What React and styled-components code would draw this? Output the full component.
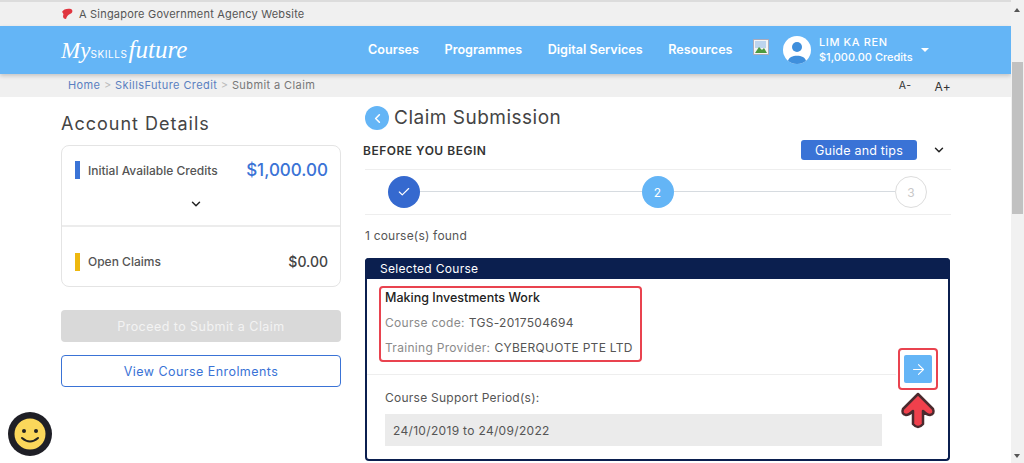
import styled, { createGlobalStyle } from 'styled-components';
import { ChevronDown, ChevronLeft, Check, ArrowRight } from 'lucide-react';

const GlobalStyle = createGlobalStyle`
    html, body {
        margin: 0;
        height: 463px;
        overflow: hidden;
        background: #fff;
        font-family: "Inter", "Open Sans", sans-serif;
        color: #4a4a4a;
    }
    * { box-sizing: border-box; }
`;

const Shell = styled.div`
    display: flex;
    width: 1024px;
    height: 463px;
    overflow: hidden;
    position: relative;
`;

const Page = styled.div`
    width: 1011px;
    flex: none;
    border-top: 2px solid #dcdcdc;
`;

const GovBar = styled.div`
    height: 24px;
    background: #f0f0f0;
    display: flex;
    align-items: center;
    gap: 6px;
    padding-left: 61px;
    font-size: 11px;
    letter-spacing: 0.2px;
    color: #555;
`;

const NavBar = styled.header`
    height: 48px;
    background: #64b5f6;
    display: flex;
    align-items: center;
    padding: 0 0 0 61px;
    box-shadow: 0 2px 4px rgba(0, 0, 0, 0.18);
    position: relative;
    color: #fff;
`;

const Logo = styled.div`
    width: 307px;
    display: flex;
    align-items: baseline;
    color: #fff;
    margin-top: -2px;
`;

const LogoScript = styled.span`
    font-family: "Liberation Serif", serif;
    font-style: italic;
    font-size: ${({ $big }) => ($big ? '25px' : '23px')};
    line-height: 1;
`;

const LogoSmall = styled.span`
    font-size: 10px;
    letter-spacing: 0.6px;
    margin: 0 1px 0 0;
`;

const NavLinks = styled.nav`
    display: flex;
    gap: 25.6px;
    font-size: 12.6px;
    font-weight: 600;
    width: 385px;
    margin-top: -2px;
`;

const BrokenImage = styled.svg`
    width: 16px;
    height: 16px;
    margin: -6px 14px 0 0;
`;

const Avatar = styled.div`
    width: 28px;
    height: 28px;
    border-radius: 50%;
    background: #fff;
    overflow: hidden;
    margin-right: 8px;
`;

const UserInfo = styled.div`
    width: 102px;
    font-size: 11px;
    line-height: 15px;
    font-weight: 500;
    letter-spacing: 0;
`;

const UserName = styled.div`
    letter-spacing: 0.6px;
`;

const Caret = styled.div`
    width: 0;
    height: 0;
    border-left: 4px solid transparent;
    border-right: 4px solid transparent;
    border-top: 4px solid #fff;
`;

const Crumbs = styled.div`
    height: 23px;
    background: #f0f0f0;
    display: flex;
    align-items: center;
    padding: 0 60px 2px 68px;
    font-size: 11px;
    letter-spacing: 0.4px;
    color: #777;
`;

const Crumb = styled.span`
    color: ${({ $link }) => ($link ? '#5a7fc0' : '#777')};
`;

const CrumbSep = styled.span`
    color: #bbb;
    margin: 0 3.5px;
`;

const FontSizes = styled.div`
    margin-left: auto;
    display: flex;
    gap: 23px;
    padding-top: 3px;
    color: #333;
`;

const FontSize = styled.span`
    font-size: ${({ $big }) => ($big ? '12px' : '10.5px')};
`;

const Main = styled.main`
    display: grid;
    grid-template-columns: 280px 586px;
    column-gap: 24px;
    padding-left: 61px;
`;

const Side = styled.aside`
    display: flex;
    flex-direction: column;
`;

const SideTitle = styled.h2`
    margin: 16px 0 10px;
    height: 22px;
    line-height: 22px;
    font-size: 18px;
    font-weight: 400;
    letter-spacing: 1px;
    color: #444;
`;

const CreditCard = styled.section`
    height: 142px;
    border: 1px solid #e4e4e4;
    border-radius: 8px;
    display: flex;
    flex-direction: column;
`;

const CreditTop = styled.div`
    height: 81px;
    border-bottom: 2px solid #ececec;
    padding: 14px 12px 0 13px;
`;

const CreditBottom = styled.div`
    flex: 1;
    padding: 10px 12px 0 13px;
    display: flex;
    align-items: center;
`;

const CreditRow = styled.div`
    display: flex;
    align-items: center;
    width: 100%;
`;

const Marker = styled.span`
    width: 5px;
    height: 18px;
    background: ${({ $color }) => $color};
    margin-right: 8px;
`;

const CreditLabel = styled.span`
    font-size: 12px;
    font-weight: 500;
    color: #555;
`;

const CreditValue = styled.span`
    margin-left: auto;
    font-size: ${({ $big }) => ($big ? '17px' : '14px')};
    font-weight: 500;
    color: ${({ $big }) => ($big ? '#3a73d6' : '#444')};
`;

const CardChevron = styled.div`
    display: flex;
    justify-content: center;
    margin: 17px 12px 0 0;
    color: #222;
`;

const SideButton = styled.button`
    height: 32px;
    border-radius: 4px;
    font-family: inherit;
    font-size: 12.5px;
    letter-spacing: 0.45px;
    margin-top: ${({ $gap }) => $gap}px;
    background: ${({ $outline }) => ($outline ? '#fff' : '#d9d9d9')};
    color: ${({ $outline }) => ($outline ? '#3a73d6' : '#f3f3f3')};
    border: ${({ $outline }) => ($outline ? '1px solid #3a73d6' : 'none')};
`;

const Content = styled.section`
    display: flex;
    flex-direction: column;
`;

const TitleRow = styled.div`
    display: flex;
    align-items: center;
    gap: 5px;
    height: 24px;
    margin-top: 9px;
`;

const BackButton = styled.div`
    width: 24px;
    height: 24px;
    border-radius: 50%;
    background: #64b5f6;
    color: #fff;
    display: flex;
    align-items: center;
    justify-content: center;
`;

const Title = styled.h1`
    margin: -2px 0 0;
    font-size: 19px;
    font-weight: 400;
    letter-spacing: 0.5px;
    color: #444;
`;

const BeginRow = styled.div`
    height: 37px;
    margin-top: 3px;
    border-bottom: 1px solid #eee;
    display: flex;
    align-items: center;
    font-size: 12px;
    font-weight: 600;
    letter-spacing: 0.5px;
    color: #333;
    padding: 0 5px 2px 0;
    width: 586px;
    text-indent: -2px;
`;

const GuideButton = styled.span`
    margin: 0 15px 0 auto;
    width: 116px;
    height: 20px;
    border-radius: 3px;
    background: #3a73d6;
    color: #fff;
    font-weight: 400;
    font-size: 12.5px;
    letter-spacing: 0.2px;
    display: flex;
    align-items: center;
    justify-content: center;
    text-indent: 0;
`;

const Stepper = styled.div`
    height: 45px;
    border-bottom: 1px solid #eee;
    padding: 6px 24px 0 23px;
    display: flex;
    align-items: flex-start;
`;

const StepDot = styled.div`
    width: 32px;
    height: 32px;
    flex: none;
    border-radius: 50%;
    display: flex;
    align-items: center;
    justify-content: center;
    font-size: 12px;
    background: ${({ $state }) => ({ done: '#3569cf', active: '#64b5f6', todo: '#fff' }[$state])};
    color: ${({ $state }) => ($state === 'todo' ? '#c8c8c8' : '#fff')};
    border: ${({ $state }) => ($state === 'todo' ? '1px solid #ddd' : 'none')};
`;

const StepLine = styled.div`
    flex: 1;
    height: 1px;
    background: #d6dbe0;
    margin-top: 15px;
`;

const FoundText = styled.div`
    margin-top: 13px;
    height: 15px;
    line-height: 15px;
    font-size: 12px;
    letter-spacing: 0.2px;
    color: #555;
`;

const CourseCard = styled.article`
    margin-top: 15px;
    width: 585px;
    height: 203px;
    border: 2px solid #0b1f4f;
    border-top: none;
    border-radius: 4px;
    position: relative;
`;

const CourseHeader = styled.div`
    height: 21px;
    margin: 0 -2px;
    background: #0b1f4f;
    border-radius: 4px 4px 0 0;
    color: #fff;
    font-size: 12px;
    letter-spacing: 0.3px;
    padding-left: 15px;
    line-height: 22px;
`;

const CourseInfo = styled.div`
    padding: 11px 0 0 18px;
    height: 96px;
    margin-right: 52px;
    border-bottom: 1px solid #eee;
`;

const CourseName = styled.div`
    font-size: 12.5px;
    font-weight: 500;
    color: #222;
    line-height: 16px;
`;

const InfoRow = styled.div`
    display: flex;
    gap: 4px;
    font-size: 12px;
    letter-spacing: 0.3px;
    line-height: 16px;
    margin-top: 9px;
    color: #555;
`;

const InfoLabel = styled.span`
    color: #8a8a8a;
`;

const Period = styled.div`
    padding: 15px 0 0 18px;
`;

const PeriodLabel = styled.div`
    font-size: 12px;
    letter-spacing: 0.25px;
    line-height: 16px;
    color: #555;
`;

const PeriodBox = styled.div`
    margin-top: 8px;
    width: 497px;
    height: 32px;
    background: #ebebeb;
    display: flex;
    align-items: center;
    padding-left: 8px;
    font-size: 12px;
    letter-spacing: 0.32px;
    color: #555;
`;

const NextButton = styled.div`
    position: absolute;
    left: 537px;
    top: 97px;
    width: 28px;
    height: 28px;
    border-radius: 2px;
    background: #64b5f6;
    color: #fff;
    display: flex;
    align-items: center;
    justify-content: center;
`;

const Highlight = styled.div`
    position: absolute;
    left: ${({ $x }) => $x}px;
    top: ${({ $y }) => $y}px;
    width: ${({ $w }) => $w}px;
    height: ${({ $h }) => $h}px;
    border: 2px solid #e9434f;
    border-radius: 4px;
`;

const RedArrow = styled.svg`
    position: absolute;
    left: 531px;
    top: 134px;
    width: 40px;
    height: 38px;
`;

const Scrollbar = styled.div`
    flex: 1;
    background: #f1f1f1;
    display: flex;
    flex-direction: column;
    align-items: center;
    padding-top: 62px;
    position: relative;
`;

const ScrollThumb = styled.div`
    width: 11px;
    height: 152px;
    background: #c1c1c1;
`;

const ScrollTri = styled.div`
    position: absolute;
    left: 3px;
    ${({ $down }) => ($down ? 'bottom: 5px;' : 'top: 8px;')}
    width: 0;
    height: 0;
    border-left: 3.5px solid transparent;
    border-right: 3.5px solid transparent;
    ${({ $down }) => ($down ? 'border-top: 4px solid #555;' : 'border-bottom: 4px solid #555;')}
`;

const Chat = styled.svg`
    position: absolute;
    left: 8px;
    top: 412px;
    width: 44px;
    height: 44px;
`;

export default function App() {
    return (
        <Shell>
            <GlobalStyle />
            <Page>
                <GovBar>
                    <svg width="12" height="12" viewBox="0 0 12 12">
                        <path d="M1 4 C2 1 7 0 10 1 C12 2 12 5 9 6 C7 7 6 8 5 11 C3 11 2 10 2 8 C3 6 2 5 1 4Z" fill="#e0353f" />
                    </svg>
                    A Singapore Government Agency Website
                </GovBar>
                <NavBar>
                    <Logo>
                        <LogoScript>My</LogoScript>
                        <LogoSmall>SKILLS</LogoSmall>
                        <LogoScript $big>future</LogoScript>
                    </Logo>
                    <NavLinks>
                        <span>Courses</span>
                        <span>Programmes</span>
                        <span>Digital Services</span>
                        <span>Resources</span>
                    </NavLinks>
                    <BrokenImage viewBox="0 0 16 16">
                        <rect x="0.5" y="0.5" width="15" height="15" fill="#f4f4f4" stroke="#aab" />
                        <rect x="2" y="2" width="11" height="7" fill="#bcd4ee" />
                        <path d="M2 14 L6 8 L9 11 L11 9 L14 14Z" fill="#4c9a3f" />
                    </BrokenImage>
                    <Avatar>
                        <svg width="28" height="28" viewBox="0 0 28 28">
                            <circle cx="14" cy="11" r="5" fill="#3f8fdc" />
                            <path d="M5 25 C6 18 22 18 23 25 L23 28 L5 28Z" fill="#3f8fdc" />
                        </svg>
                    </Avatar>
                    <UserInfo>
                        <UserName>LIM KA REN</UserName>
                        <div>$1,000.00 Credits</div>
                    </UserInfo>
                    <Caret />
                </NavBar>
                <Crumbs>
                    <Crumb $link>Home</Crumb>
                    <CrumbSep>&gt;</CrumbSep>
                    <Crumb $link>SkillsFuture Credit</Crumb>
                    <CrumbSep>&gt;</CrumbSep>
                    <Crumb>Submit a Claim</Crumb>
                    <FontSizes>
                        <FontSize>A-</FontSize>
                        <FontSize $big>A+</FontSize>
                    </FontSizes>
                </Crumbs>
                <Main>
                    <Side>
                        <SideTitle>Account Details</SideTitle>
                        <CreditCard>
                            <CreditTop>
                                <CreditRow>
                                    <Marker $color="#3a73d6" />
                                    <CreditLabel>Initial Available Credits</CreditLabel>
                                    <CreditValue $big>$1,000.00</CreditValue>
                                </CreditRow>
                                <CardChevron>
                                    <ChevronDown size={14} strokeWidth={2.5} />
                                </CardChevron>
                            </CreditTop>
                            <CreditBottom>
                                <CreditRow>
                                    <Marker $color="#eeb80f" />
                                    <CreditLabel>Open Claims</CreditLabel>
                                    <CreditValue>$0.00</CreditValue>
                                </CreditRow>
                            </CreditBottom>
                        </CreditCard>
                        <SideButton $gap={23}>Proceed to Submit a Claim</SideButton>
                        <SideButton $gap={13} $outline>View Course Enrolments</SideButton>
                    </Side>
                    <Content>
                        <TitleRow>
                            <BackButton>
                                <ChevronLeft size={15} strokeWidth={2.5} />
                            </BackButton>
                            <Title>Claim Submission</Title>
                        </TitleRow>
                        <BeginRow>
                            BEFORE YOU BEGIN
                            <GuideButton>Guide and tips</GuideButton>
                            <ChevronDown size={14} strokeWidth={2.5} color="#222" />
                        </BeginRow>
                        <Stepper>
                            <StepDot $state="done"><Check size={14} strokeWidth={2} /></StepDot>
                            <StepLine />
                            <StepDot $state="active">2</StepDot>
                            <StepLine />
                            <StepDot $state="todo">3</StepDot>
                        </Stepper>
                        <FoundText>1 course(s) found</FoundText>
                        <CourseCard>
                            <CourseHeader>Selected Course</CourseHeader>
                            <CourseInfo>
                                <CourseName>Making Investments Work</CourseName>
                                <InfoRow>
                                    <InfoLabel>Course code:</InfoLabel>
                                    <span>TGS-2017504694</span>
                                </InfoRow>
                                <InfoRow>
                                    <InfoLabel>Training Provider:</InfoLabel>
                                    <span>CYBERQUOTE PTE LTD</span>
                                </InfoRow>
                            </CourseInfo>
                            <Period>
                                <PeriodLabel>Course Support Period(s):</PeriodLabel>
                                <PeriodBox>24/10/2019 to 24/09/2022</PeriodBox>
                            </Period>
                            <NextButton>
                                <ArrowRight size={17} strokeWidth={1.5} />
                            </NextButton>
                            <Highlight $x={12} $y={28} $w={263} $h={76} />
                            <Highlight $x={531} $y={90} $w={40} $h={42} />
                            <RedArrow viewBox="0 0 40 38">
                                <path
                                    d="M20 2 L35 17 Q37 22 32 23 Q29 23 25 19 L25 32 Q20 38 15 32 L15 19 Q11 23 8 23 Q3 22 5 17Z"
                                    fill="#f0404c"
                                    stroke="#4a2a2e"
                                    strokeWidth="2.5"
                                    strokeLinejoin="round"
                                />
                            </RedArrow>
                        </CourseCard>
                    </Content>
                </Main>
            </Page>
            <Scrollbar>
                <ScrollTri />
                <ScrollThumb />
                <ScrollTri $down />
            </Scrollbar>
            <Chat viewBox="0 0 44 44">
                <circle cx="22" cy="22" r="22" fill="#1f1f26" />
                <circle cx="22" cy="22" r="15.5" fill="#fbd75b" />
                <circle cx="16" cy="19" r="2" fill="#222" />
                <circle cx="28" cy="19" r="2" fill="#222" />
                <path d="M14 26 Q22 33 30 26" fill="none" stroke="#222" strokeWidth="2" strokeLinecap="round" />
            </Chat>
        </Shell>
    );
}
